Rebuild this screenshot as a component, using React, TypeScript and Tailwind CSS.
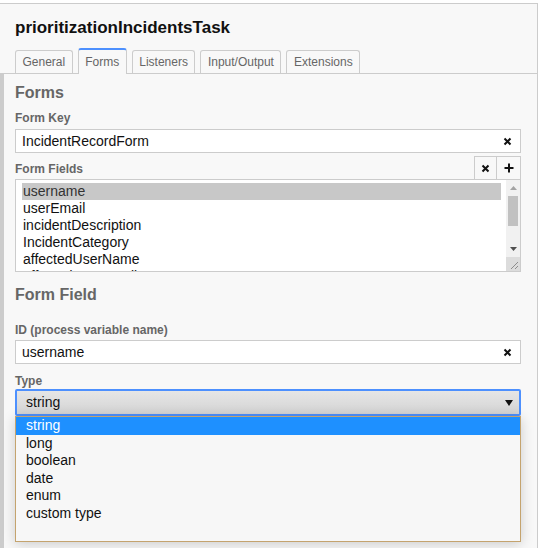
import React from "react";

const tabs = ["General", "Forms", "Listeners", "Input/Output", "Extensions"];
const fields = ["username", "userEmail", "incidentDescription", "IncidentCategory", "affectedUserName", "affectedUserEmail"];
const types = ["string", "long", "boolean", "date", "enum", "custom type"];

function ClearX() {
  return (
    <svg width="9" height="9" viewBox="0 0 9 9" className="shrink-0">
      <path d="M1.5 1.5 L7.5 7.5 M7.5 1.5 L1.5 7.5" stroke="#111" strokeWidth="2" />
    </svg>
  );
}

export default function App() {
  return (
    <div
      className="w-[539px] h-[548px] bg-white overflow-hidden text-[#333]"
      style={{ fontFamily: '"Liberation Sans", Arial, sans-serif' }}
    >
      <div className="mt-[3px] w-[538px] h-[545px] border-t border-r border-[#cccccc] bg-[#f8f8f8] flex flex-col">
        {/* header */}
        <div className="pl-[15px] pt-[14px] h-[45px]">
          <div className="text-[17px] font-bold text-[#111] leading-[20px]">prioritizationIncidentsTask</div>
        </div>
        <div className="flex items-end gap-[5px] pl-[15px] h-[25px] border-b border-[#cccccc] relative">
          {tabs.map((t) =>
            t === "Forms" ? (
              <div
                key={t}
                className="relative -mb-px h-[26px] px-[6.5px] flex items-center bg-[#f8f8f8] border border-b-0 border-[#cccccc] border-t-2 border-t-[#4d90fe] rounded-t-[3px] text-[12px] text-[#666]"
              >
                {t}
              </div>
            ) : (
              <div
                key={t}
                className="h-[23px] px-[6.5px] flex items-center border border-b-0 border-[#cccccc] rounded-t-[3px] text-[12px] text-[#666]"
              >
                {t}
              </div>
            )
          )}
        </div>
        {/* body */}
        <div className="flex-1 flex border-l-[4px] border-[#cccccc]">
          <div className="flex-1 pl-[11px] pr-[16px] relative">
            <div className="text-[16px] font-bold text-[#666] mt-[9px] leading-[20px]">Forms</div>

            <div className="text-[12px] font-bold text-[#666] mt-[8px] leading-[14px]">Form Key</div>
            <div className="mt-[4px] h-[24px] bg-white border border-[#cccccc] flex items-center pl-[6px] pr-[8px]">
              <span className="flex-1 text-[14px] text-[#111]">IncidentRecordForm</span>
              <ClearX />
            </div>

            <div className="mt-[3px] flex items-end h-[23px]">
              <div className="flex-1 text-[12px] font-bold text-[#666] mb-[3px] leading-[14px]">Form Fields</div>
              <div className="w-[23px] h-[23px] border border-[#cccccc] border-b-0 flex items-center justify-center">
                <ClearX />
              </div>
              <div className="w-[24px] h-[23px] border border-l-0 border-[#cccccc] border-b-0 flex items-center justify-center">
                <svg width="10" height="10" viewBox="0 0 10 10">
                  <path d="M5 0.5 V9.5 M0.5 5 H9.5" stroke="#111" strokeWidth="2" />
                </svg>
              </div>
            </div>
            <div className="h-[93px] bg-white border border-[#cccccc] flex overflow-hidden">
              <div className="flex-1 pl-[6px] pr-[5px] pt-[3px]">
                {fields.map((f, i) => (
                  <div
                    key={f}
                    className={`h-[17px] leading-[17px] text-[14px] pl-[1px] text-[#111] ${i === 0 ? "bg-[#c8c8c8] text-[#333]" : ""}`}
                  >
                    {f}
                  </div>
                ))}
              </div>
              <div className="w-[14px] flex flex-col bg-[#f1f1f1]">
                <div className="h-[16px] flex items-center justify-center">
                  <svg width="7" height="4" viewBox="0 0 7 4"><path d="M0 4 L3.5 0 L7 4 Z" fill="#a3a3a3" /></svg>
                </div>
                <div className="mx-[2px] h-[30px] bg-[#c1c1c1]" />
                <div className="flex-1" />
                <div className="h-[16px] flex items-center justify-center">
                  <svg width="7" height="4" viewBox="0 0 7 4"><path d="M0 0 L7 0 L3.5 4 Z" fill="#505050" /></svg>
                </div>
                <div className="h-[14px] bg-[#dcdcdc] flex items-end justify-end p-[2px]">
                  <svg width="8" height="8" viewBox="0 0 8 8">
                    <path d="M1 8 L8 1 M5 8 L8 5" stroke="#777" strokeWidth="0.8" />
                  </svg>
                </div>
              </div>
            </div>

            <div className="text-[16px] font-bold text-[#666] mt-[13px] leading-[20px]">Form Field</div>

            <div className="text-[12px] font-bold text-[#666] mt-[18px] leading-[14px]">ID (process variable name)</div>
            <div className="mt-[3px] h-[24px] bg-white border border-[#cccccc] flex items-center pl-[6px] pr-[8px]">
              <span className="flex-1 text-[14px] text-[#111]">username</span>
              <ClearX />
            </div>

            <div className="text-[12px] font-bold text-[#666] mt-[10px] leading-[14px]">Type</div>
            <div className="mt-[1px] h-[27px] border-2 border-[#4d90fe] rounded-[2px] bg-gradient-to-b from-[#e6e6e6] to-[#d4d4d4] flex items-center pl-[9px] pr-[6px]">
              <span className="flex-1 text-[14px] text-[#111]">string</span>
              <svg width="8" height="6" viewBox="0 0 8 6"><path d="M0 0 L8 0 L4 6 Z" fill="#111" /></svg>
            </div>

            {/* open dropdown */}
            <div className="h-[126px] border border-[#c4a36e] bg-[#f7f7f7] shadow-[0_2px_12px_rgba(0,0,0,0.18)] relative z-10">
              <div className="h-[17.6px] leading-[17.6px] bg-[#1e90ff] text-white text-[14px] pl-[10px]">string</div>
              {types.slice(1).map((t) => (
                <div key={t} className="h-[17.6px] leading-[17.6px] text-[14px] text-[#111] pl-[10px]">
                  {t}
                </div>
              ))}
            </div>
          </div>
        </div>
      </div>
    </div>
  );
}
